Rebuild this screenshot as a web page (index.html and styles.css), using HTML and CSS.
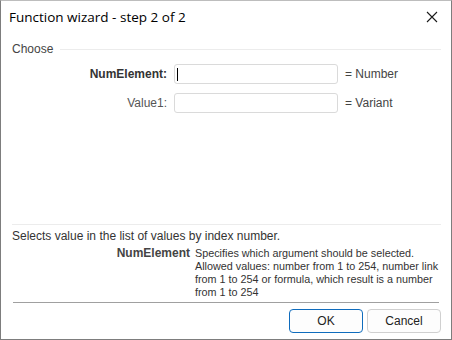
FILE: index.html
```html
<!DOCTYPE html>
<html lang="en">
<head>
    <meta charset="UTF-8">
    <title>Function wizard - step 2 of 2</title>
    <link rel="stylesheet" href="styles.css">
</head>
<body>
    <div class="window">
        <div class="titlebar">
            <span class="title">Function wizard - step 2 of 2</span>
            <svg class="close" width="12" height="12" viewBox="0 0 12 12">
                <path d="M1 1 L11 11 M11 1 L1 11" stroke="#1a1a1a" stroke-width="1.1" fill="none"/>
            </svg>
        </div>

        <div class="content">
            <div class="group-head">
                <span>Choose</span>
                <div class="group-line"></div>
            </div>

            <div class="args">
                <label class="arg-name active" for="numElement">NumElement:</label>
                <div class="field"><span class="caret"></span><input type="text" id="numElement"></div>
                <span class="arg-type">= Number</span>

                <label class="arg-name" for="value1">Value1:</label>
                <div class="field"><input type="text" id="value1"></div>
                <span class="arg-type">= Variant</span>
            </div>

            <div class="bottom">
                <div class="sep-light"></div>
                <p class="func-desc">Selects value in the list of values by index number.</p>
                <div class="param">
                    <span class="param-name">NumElement</span>
                    <span class="param-text">Specifies which argument should be selected.<br>Allowed values: number from 1 to 254, number link<br>from 1 to 254 or formula, which result is a number<br>from 1 to 254</span>
                </div>
                <div class="sep-dark"></div>
                <div class="buttons">
                    <button class="btn btn-default">OK</button>
                    <button class="btn">Cancel</button>
                </div>
            </div>
        </div>
    </div>
</body>
</html>
```

FILE: styles.css
```css
/* Basic Reset */
* {
    margin: 0;
    padding: 0;
    box-sizing: border-box;
}

body {
    font-family: "Liberation Sans", Arial, sans-serif;
    font-size: 12px;
    color: #333;
    background-color: #fff;
}

.window {
    width: 452px;
    height: 340px;
    border: 1px solid #7d7d7d;
    border-top-color: #bdbdbd;
    background-color: #fff;
    display: flex;
    flex-direction: column;
}

.titlebar {
    height: 31px;
    display: flex;
    align-items: center;
    justify-content: space-between;
    padding: 0 13px 0 8px;
}

.title {
    font-family: "Open Sans", sans-serif;
    font-size: 13.5px;
    color: #000;
}

.content {
    flex: 1;
    display: flex;
    flex-direction: column;
    padding: 0 10px 6px 11px;
}

/* group heading */
.group-head {
    display: flex;
    align-items: center;
    gap: 7px;
    margin-top: 10px;
    height: 14px;
    color: #444;
}

.group-line {
    flex: 1;
    height: 1px;
    background-color: #ececec;
}

/* argument rows */
.args {
    display: grid;
    grid-template-columns: 155px 164px auto;
    column-gap: 7px;
    row-gap: 9px;
    align-items: center;
    margin-top: 8px;
    white-space: nowrap;
}

.arg-name {
    text-align: right;
    color: #555;
}

.arg-name.active {
    font-weight: bold;
    color: #333;
}

.field {
    position: relative;
    height: 20px;
}

.field input {
    width: 100%;
    height: 20px;
    border: 1px solid #dadada;
    border-radius: 3px;
    outline: none;
    background-color: #fff;
}

.caret {
    position: absolute;
    left: 3px;
    top: 4px;
    width: 1px;
    height: 13px;
    background-color: #000;
}

.arg-type {
    color: #444;
}

/* bottom part */
.bottom {
    margin-top: auto;
}

.sep-light {
    height: 1px;
    background-color: #ececec;
}

.func-desc {
    margin-top: 4px;
    line-height: 14px;
    white-space: nowrap;
}

.param {
    display: flex;
    gap: 5px;
    margin-top: 4px;
    line-height: 13px;
    white-space: nowrap;
}

.param-name {
    flex: none;
    width: 178px;
    text-align: right;
    font-weight: bold;
    color: #444;
}

.param-text {
    font-size: 10.8px;
}

.sep-dark {
    height: 1px;
    background-color: #a0a0a0;
    margin: 3px 2px 0 1px;
}

.buttons {
    display: flex;
    justify-content: flex-end;
    gap: 4px;
    margin-top: 6px;
}

.btn {
    width: 74px;
    height: 24px;
    font-family: "Liberation Sans", Arial, sans-serif;
    font-size: 12px;
    color: #222;
    background-color: #fdfdfd;
    border: 1px solid #d0d0d0;
    border-radius: 4px;
}

.btn-default {
    border-color: #0f6cbd;
}
```
